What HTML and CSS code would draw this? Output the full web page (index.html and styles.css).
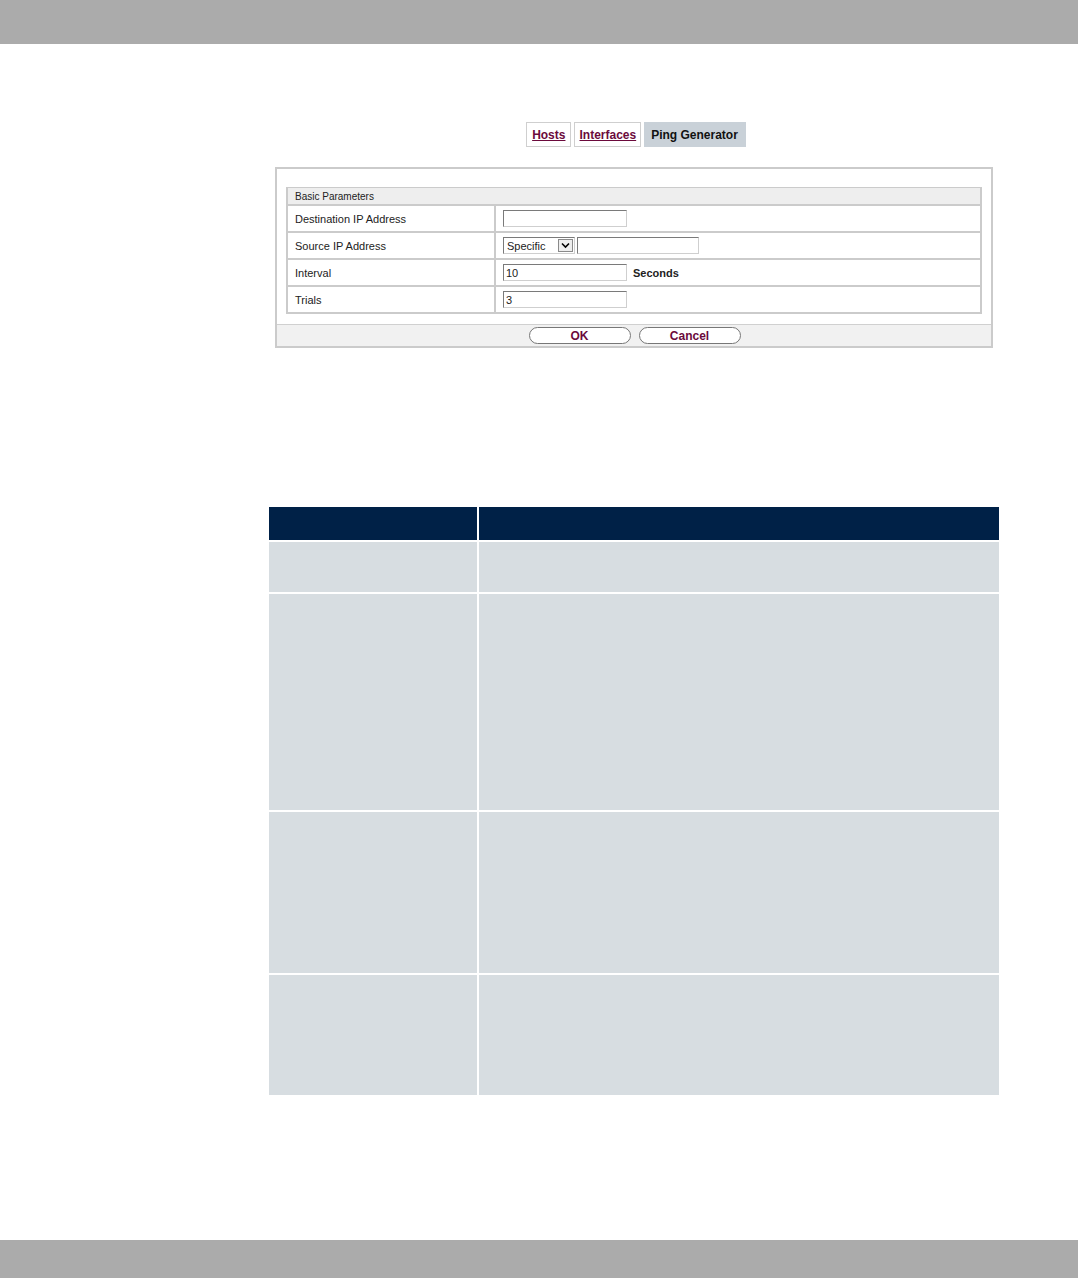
FILE: index.html
```html
<!DOCTYPE html>
<html>
<head>
<meta charset="utf-8">
<link rel="stylesheet" href="styles.css">
</head>
<body>
<div class="page">
  <div class="topbar"></div>
  <div class="main">
    <div class="tabs">
      <a class="tab" href="#">Hosts</a>
      <a class="tab" href="#">Interfaces</a>
      <span class="tab active">Ping Generator</span>
    </div>
    <div class="formbox">
      <div class="params">
        <div class="params-head">Basic Parameters</div>
        <div class="prow">
          <div class="plabel">Destination IP Address</div>
          <div class="pvalue"><span class="input"></span></div>
        </div>
        <div class="prow">
          <div class="plabel">Source IP Address</div>
          <div class="pvalue">
            <span class="select">Specific<span class="arrow"><svg width="13" height="11" viewBox="0 0 13 11"><path d="M3 3.5 L6.5 7 L10 3.5" fill="none" stroke="#000" stroke-width="1.6"/></svg></span></span>
            <span class="input short"></span>
          </div>
        </div>
        <div class="prow">
          <div class="plabel">Interval</div>
          <div class="pvalue"><span class="input">10</span><span class="unit">Seconds</span></div>
        </div>
        <div class="prow">
          <div class="plabel">Trials</div>
          <div class="pvalue"><span class="input">3</span></div>
        </div>
      </div>
      <div class="buttonbar">
        <span class="btn">OK</span>
        <span class="btn">Cancel</span>
      </div>
    </div>
  </div>
  <div class="desc">
    <div class="dcell head"></div><div class="dcell head"></div>
    <div class="dcell r1"></div><div class="dcell r1"></div>
    <div class="dcell r2"></div><div class="dcell r2"></div>
    <div class="dcell r3"></div><div class="dcell r3"></div>
    <div class="dcell r4"></div><div class="dcell r4"></div>
  </div>
  <div class="bottombar"></div>
</div>
</body>
</html>
```
FILE: styles.css
```css
html, body {
  margin: 0;
  padding: 0;
  background: #ffffff;
}
.page {
  height: 1278px;
  display: flex;
  flex-direction: column;
  font-family: "Liberation Sans", Arial, sans-serif;
}
.topbar {
  height: 44px;
  background: #ababab;
  flex: none;
}
.main {
  margin-left: 275px;
  width: 718px;
  margin-top: 78px;
}
.tabs {
  display: flex;
  justify-content: center;
  gap: 3px;
  padding-left: 4px;
  height: 25px;
}
.tab {
  box-sizing: border-box;
  height: 25px;
  padding: 0 5px;
  border: 1px solid #cfcfcf;
  display: flex;
  align-items: center;
  font-size: 12px;
  font-weight: bold;
  color: #6b0a3c;
  text-decoration: underline;
}
.tab + .tab {
  padding: 0 4px;
}
.tab.active {
  color: #111;
  text-decoration: none;
  background: #c9d1d8;
  border-color: #c9d1d8;
  padding: 0 7px 0 6px;
}
.formbox {
  margin-top: 20px;
  border: 2px solid #cbcbcb;
  height: 177px;
  display: flex;
  flex-direction: column;
}
.params {
  margin: 18px 9px 0 9px;
  border: 2px solid #cbcbcb;
  border-top-width: 1px;
  font-size: 11px;
  color: #222;
}
.params-head {
  height: 16px;
  background: #eeeeee;
  font-size: 10px;
  display: flex;
  align-items: center;
  padding-left: 7px;
  border-bottom: 2px solid #cbcbcb;
}
.prow {
  display: flex;
  height: 25px;
  border-bottom: 2px solid #cbcbcb;
}
.prow:last-child {
  border-bottom: none;
}
.plabel {
  width: 199px;
  padding-left: 7px;
  border-right: 2px solid #cbcbcb;
  display: flex;
  align-items: center;
}
.pvalue {
  display: flex;
  align-items: center;
  padding-left: 7px;
  gap: 2px;
}
.input {
  box-sizing: border-box;
  width: 124px;
  height: 17px;
  border: 1px solid #cfcfcf;
  border-top-color: #7a7a7a;
  border-left-color: #7a7a7a;
  font-size: 11px;
  padding-left: 2px;
  display: flex;
  align-items: center;
  background: #fff;
}
.input.short {
  width: 122px;
}
.select {
  box-sizing: border-box;
  width: 72px;
  height: 17px;
  border: 1px solid #cfcfcf;
  border-top-color: #7a7a7a;
  border-left-color: #7a7a7a;
  font-size: 11px;
  padding-left: 3px;
  display: flex;
  align-items: center;
  justify-content: space-between;
}
.arrow {
  width: 15px;
  height: 13px;
  box-sizing: border-box;
  border: 1px solid #8a8a8a;
  background: #eee;
  margin-right: 1px;
  display: flex;
  align-items: center;
  justify-content: center;
}
.unit {
  font-weight: bold;
  margin-left: 4px;
  font-size: 11px;
}
.buttonbar {
  margin-top: auto;
  height: 21px;
  background: #f1f1f1;
  border-top: 1px solid #d0d0d0;
  display: flex;
  justify-content: center;
  align-items: center;
  gap: 8px;
  padding-left: 1px;
}
.btn {
  box-sizing: border-box;
  width: 102px;
  height: 17px;
  border: 1px solid #777;
  border-radius: 9px;
  background: #fff;
  color: #6b0a3c;
  font-weight: bold;
  font-size: 12px;
  display: flex;
  align-items: center;
  justify-content: center;
}
.desc {
  margin-left: 269px;
  width: 730px;
  margin-top: 159px;
  display: grid;
  grid-template-columns: 208px 1fr;
  grid-template-rows: 33px 50px 216px 161px 120px;
  column-gap: 2px;
  row-gap: 2px;
  background: #ffffff;
}
.dcell {
  background: #d7dde1;
}
.dcell.head {
  background: #002147;
}
.bottombar {
  margin-top: auto;
  height: 38px;
  background: #ababab;
  flex: none;
}
```
